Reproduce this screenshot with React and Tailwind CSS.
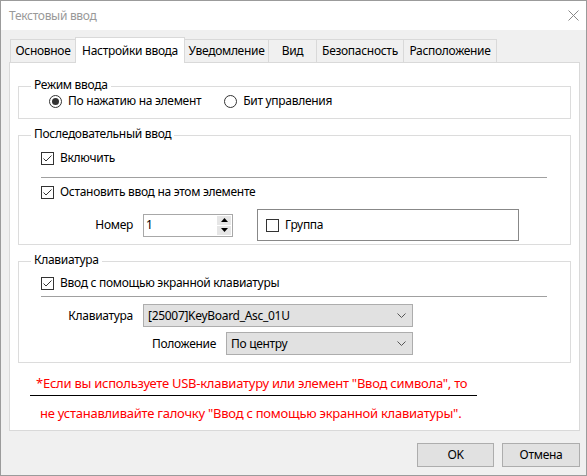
import React from 'react';

// Small Win32-style controls
const CheckBox = ({ checked }) => (
  <svg width="13" height="13" viewBox="0 0 13 13" className="shrink-0">
    <rect x="0.5" y="0.5" width="12" height="12" fill="#fff" stroke="#333" />
    {checked && <path d="M2.5 6.5 L5 9 L10.5 3.5" fill="none" stroke="#333" strokeWidth="1" />}
  </svg>
);

const Radio = ({ checked }) => (
  <svg width="13" height="13" viewBox="0 0 13 13" className="shrink-0">
    <circle cx="6.5" cy="6.5" r="6" fill="#fff" stroke="#333" />
    {checked && <circle cx="6.5" cy="6.5" r="3.5" fill="#333" />}
  </svg>
);

const Chevron = () => (
  <svg width="9" height="5" viewBox="0 0 9 5" className="shrink-0">
    <path d="M0.5 0.5 L4.5 4.5 L8.5 0.5" fill="none" stroke="#555" strokeWidth="1" />
  </svg>
);

const Group = ({ title, className, children }) => (
  <div className={`relative mx-[8px] border border-[#dcdcdc] ${className}`}>
    <span className="absolute -top-[10px] left-[12px] bg-white px-[3px] leading-[16px]">{title}</span>
    {children}
  </div>
);

const Select = ({ value, className }) => (
  <div className={`flex h-[23px] items-center justify-between border border-[#adadad] bg-[#e1e1e1] pl-[4px] pr-[6px] ${className}`}>
    <span>{value}</span>
    <Chevron />
  </div>
);

const tabs = [
  { label: 'Основное', w: 'w-[66px] h-[23px] mb-[1px] bg-[#f0f0f0]' },
  { label: 'Настройки ввода', w: 'w-[110px] h-[26px] bg-white' },
  { label: 'Уведомление', w: 'w-[85px] h-[23px] mb-[1px] bg-[#f0f0f0]' },
  { label: 'Вид', w: 'w-[49px] h-[23px] mb-[1px] bg-[#f0f0f0]' },
  { label: 'Безопасность', w: 'w-[88px] h-[23px] mb-[1px] bg-[#f0f0f0]' },
  { label: 'Расположение', w: 'w-[94px] h-[23px] mb-[1px] bg-[#f0f0f0]' },
];

export default function App() {
  return (
    <div className="flex h-[476px] w-[587px] flex-col border border-[#9b9b9b] bg-[#f0f0f0] font-['Noto_Sans',sans-serif] text-[12px] tracking-[-0.3px] text-black">
      {/* Title bar */}
      <div className="flex h-[29px] items-center justify-between bg-white pl-[8px] pr-[7px]">
        <span className="text-[12px] text-[#999]">Текстовый ввод</span>
        <svg width="11" height="11" viewBox="0 0 11 11">
          <path d="M0.5 0.5 L10.5 10.5 M10.5 0.5 L0.5 10.5" stroke="#888" strokeWidth="1" />
        </svg>
      </div>

      <div className="flex flex-1 flex-col pl-[8px] pt-[7px]">
        {/* Tabs */}
        <div className="relative z-10 -mb-[1px] flex items-end pl-[1px]">
          {tabs.map((t, i) => (
            <div
              key={t.label}
              className={`flex items-center justify-center border border-b-0 border-[#d9d9d9] ${i > 0 ? '-ml-[1px]' : ''} ${t.w}`}
            >
              {t.label}
            </div>
          ))}
        </div>

        {/* Tab panel */}
        <div className="flex h-[369px] w-[571px] flex-col border border-[#d9d9d9] bg-white">
          <Group title="Режим ввода" className="mt-[23px] h-[33px]">
            <div className="flex items-center pl-[30px] pt-[7px]">
              <Radio checked />
              <span className="ml-[6px] leading-[14px]">По нажатию на элемент</span>
              <div className="ml-[23px] flex items-center">
                <Radio />
                <span className="ml-[6px] leading-[14px]">Бит управления</span>
              </div>
            </div>
          </Group>

          <Group title="Последовательный ввод" className="mt-[16px] h-[110px]">
            <div className="flex flex-col pl-[22px] pt-[12px]">
              <div className="flex h-[20px] items-center">
                <CheckBox checked />
                <span className="ml-[6px]">Включить</span>
              </div>
              <div className="mt-[9px] h-px w-[506px] bg-[#a0a0a0]" />
              <div className="mt-[4px] flex h-[20px] items-center">
                <CheckBox checked />
                <span className="ml-[6px]">Остановить ввод на этом элементе</span>
              </div>
            </div>
            <div className="mt-[7px] flex h-[32px] items-center">
              <span className="w-[114px] text-right">Номер</span>
              <div className="ml-[10px] flex h-[23px] w-[90px] items-center justify-between border border-[#a8a8a8] pl-[2px] pr-[1px]">
                <span>1</span>
                <div className="flex flex-col gap-[1px]">
                  <div className="flex h-[9px] w-[14px] items-center justify-center bg-[#e6e6e6]">
                    <svg width="7" height="4" viewBox="0 0 7 4"><path d="M0 4 L3.5 0 L7 4 Z" fill="#000" /></svg>
                  </div>
                  <div className="flex h-[9px] w-[14px] items-center justify-center bg-[#e6e6e6]">
                    <svg width="7" height="4" viewBox="0 0 7 4"><path d="M0 0 L7 0 L3.5 4 Z" fill="#000" /></svg>
                  </div>
                </div>
              </div>
              <div className="ml-[24px] flex h-[32px] w-[262px] items-center border border-[#888] pl-[8px]">
                <CheckBox />
                <span className="ml-[6px]">Группа</span>
              </div>
            </div>
          </Group>

          <Group title="Клавиатура" className="mt-[16px] h-[102px]">
            <div className="flex flex-col pl-[22px] pt-[11px]">
              <div className="flex h-[20px] items-center">
                <CheckBox checked />
                <span className="ml-[6px]">Ввод с помощью экранной клавиатуры</span>
              </div>
              <div className="mt-[3px] h-px w-[506px] bg-[#a0a0a0]" />
            </div>
            <div className="mt-[7px] flex items-center">
              <span className="w-[114px] text-right">Клавиатура</span>
              <Select value="[25007]KeyBoard_Asc_01U" className="ml-[10px] w-[270px]" />
            </div>
            <div className="mt-[5px] flex items-center">
              <span className="w-[197px] text-right">Положение</span>
              <Select value="По центру" className="ml-[10px] w-[187px]" />
            </div>
          </Group>

          <div className="flex flex-col pl-[20px] pt-[10px] text-[13px] tracking-[-0.25px] text-[#ff0000]">
            <div className="h-[20px] pl-[6px] leading-[20px]">
              *Если вы используете USB-клавиатуру или элемент "Ввод символа", то
            </div>
            <div className="mt-[2px] h-px w-[447px] bg-black" />
            <div className="mt-[7px] h-[20px] pl-[10px] leading-[20px]">
              не устанавливайте галочку "Ввод с помощью экранной клавиатуры".
            </div>
          </div>
        </div>

        {/* Buttons */}
        <div className="mt-[12px] flex w-[571px] justify-end gap-[8px]">
          <button className="h-[24px] w-[77px] border border-[#adadad] bg-[#e1e1e1]">OK</button>
          <button className="h-[24px] w-[78px] border border-[#adadad] bg-[#e1e1e1]">Отмена</button>
        </div>
      </div>
    </div>
  );
}
